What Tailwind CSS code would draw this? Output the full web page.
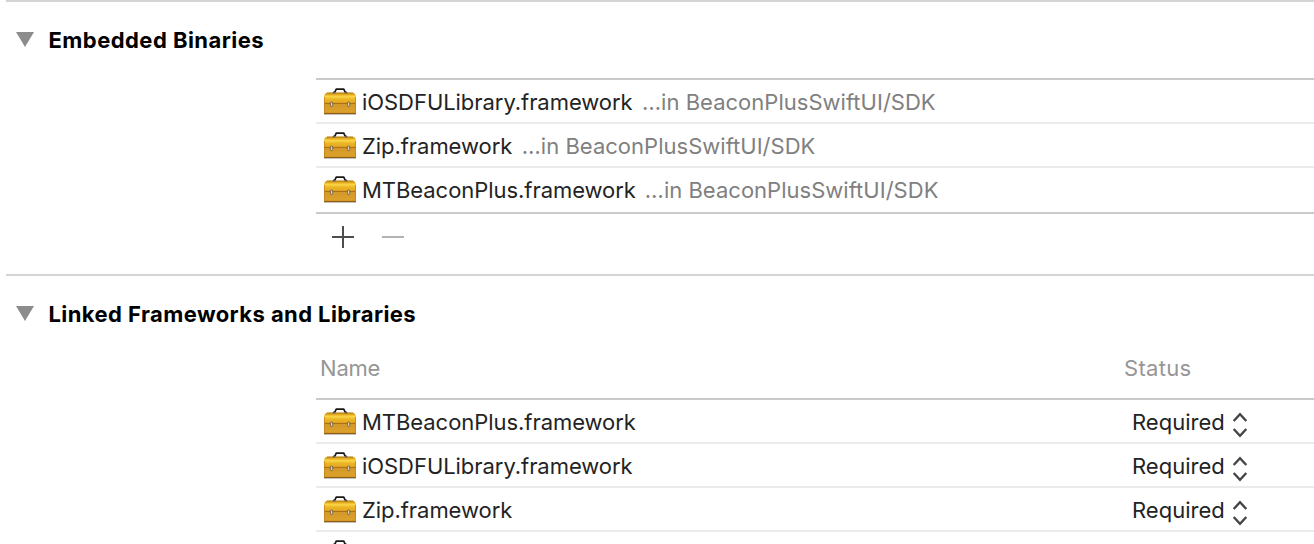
<!DOCTYPE html>
<html lang="en">
<head>
<meta charset="utf-8">
<title>Target – General</title>
<script src="https://cdn.jsdelivr.net/npm/@tailwindcss/browser@4"></script>
</head>
<body class="h-[544px] overflow-hidden bg-white font-[Inter,'Liberation_Sans',sans-serif] text-[22px] leading-[26px] tracking-[-0.05px] text-[#232323]">
<svg class="absolute h-0 w-0">
  <defs>
    <linearGradient id="lid" x1="0" y1="0" x2="0" y2="1">
      <stop offset="0" stop-color="#c98d12"/><stop offset=".2" stop-color="#e9b526"/><stop offset=".38" stop-color="#fbd848"/><stop offset=".55" stop-color="#edb928"/><stop offset="1" stop-color="#e0a422"/>
    </linearGradient>
    <linearGradient id="box" x1="0" y1="0" x2="0" y2="1">
      <stop offset="0" stop-color="#d4982a"/><stop offset="1" stop-color="#dda22a"/>
    </linearGradient>
  </defs>
  <symbol id="toolbox" viewBox="0 0 32 28">
    <rect x="0" y="25.6" width="32" height="1.4" fill="#8f8f8f" opacity=".55"/>
    <path d="M0 15.5V8.5Q.6 5 3.5 4.8H28.5Q31.4 5 32 8.5V15.5Z" fill="url(#lid)"/>
    <path d="M3 5H29" stroke="#b57c10" stroke-width=".8"/>
    <rect x="0" y="15.5" width="32" height="10" fill="url(#box)"/>
    <path d="M0 15.4H32" stroke="#a96a0a" stroke-width="1"/>
    <path d="M0 25.4H32" stroke="#8a5208" stroke-width="1"/>
    <path d="M.4 9V25.5M31.6 9V25.5" stroke="#bd8218" stroke-width=".8"/>
    <path d="M9.2 4.7 11.1 3.8 12.2 1.1H19.8L20.9 3.8 22.8 4.7" fill="none" stroke="#1c1a18" stroke-width="1.7" stroke-linejoin="round"/>
    <path d="M8.6 4.8H11M21 4.8H23.4" stroke="#77705f" stroke-width="1.2"/>
    <rect x="6.4" y="14" width="2.3" height="4.6" rx="1.1" fill="#d9d3c1" stroke="#65543a" stroke-width=".8"/>
    <rect x="23.4" y="14" width="2.3" height="4.6" rx="1.1" fill="#d9d3c1" stroke="#65543a" stroke-width=".8"/>
  </symbol>
  <symbol id="stepper" viewBox="0 0 16 26">
    <path d="M1.7 9 8 2.2 14.3 9M1.7 17 8 23.8 14.3 17" fill="none" stroke="#444" stroke-width="2.3"/>
  </symbol>
  <symbol id="disclosure" viewBox="0 0 18 15">
    <path d="M0 0H18L9 15Z" fill="#8c8c8c"/>
  </symbol>
</svg>

<section class="ml-[6px] h-[274px] border-t-2 border-[#d4d4d4]">
  <header class="flex h-[76px] items-center gap-[14.5px] pl-[10px] font-bold tracking-[0.45px] text-black">
    <svg class="mb-[2px] h-[15px] w-[18px] shrink-0"><use href="#disclosure"/></svg>
    <h2 class="whitespace-nowrap">Embedded Binaries</h2>
  </header>
  <div class="ml-[310px]">
    <ul class="border-y-2 border-[#cacaca]">
      <li class="flex h-11 items-start border-b-2 border-[#ebebeb] pl-2 pt-[9px]">
        <svg class="-mt-[1px] h-7 w-8 shrink-0"><use href="#toolbox"/></svg>
        <span class="ml-[6px]">iOSDFULibrary.framework</span>
        <span class="ml-[9.5px] tracking-[0.02px] text-[#808080]">…in BeaconPlusSwiftUI/SDK</span>
      </li>
      <li class="flex h-11 items-start border-b-2 border-[#ebebeb] pl-2 pt-[9px]">
        <svg class="-mt-[1px] h-7 w-8 shrink-0"><use href="#toolbox"/></svg>
        <span class="ml-[6px]">Zip.framework</span>
        <span class="ml-[9.5px] tracking-[0.02px] text-[#808080]">…in BeaconPlusSwiftUI/SDK</span>
      </li>
      <li class="flex h-11 items-start pl-2 pt-[9px]">
        <svg class="-mt-[1px] h-7 w-8 shrink-0"><use href="#toolbox"/></svg>
        <span class="ml-[6px]">MTBeaconPlus.framework</span>
        <span class="ml-[9px] tracking-[0.02px] text-[#808080]">…in BeaconPlusSwiftUI/SDK</span>
      </li>
    </ul>
    <div class="flex gap-7 pl-4 pt-3">
      <svg class="h-[22px] w-[22px]" viewBox="0 0 22 22"><path d="M0 11H22M11 0V22" stroke="#4d4d4d" stroke-width="2"/></svg>
      <svg class="h-[22px] w-[22px]" viewBox="0 0 22 22"><path d="M0 11H22" stroke="#b2b2b2" stroke-width="2"/></svg>
    </div>
  </div>
</section>

<section class="ml-[6px] border-t-2 border-[#d4d4d4]">
  <header class="flex h-[76px] items-center gap-[14.5px] pl-[10px] font-bold tracking-[0.42px] text-black">
    <svg class="mb-[2px] h-[15px] w-[18px] shrink-0"><use href="#disclosure"/></svg>
    <h2 class="whitespace-nowrap">Linked Frameworks and Libraries</h2>
  </header>
  <div class="ml-[310px]">
    <div class="flex h-[48px] border-b-2 border-[#cacaca] pl-1 pt-[3px] text-[#969696]">
      <span class="w-[804px] tracking-[-0.2px]">Name</span>
      <span class="tracking-[0.3px]">Status</span>
    </div>
    <ul>
      <li class="flex h-11 items-start border-b-2 border-[#ebebeb] pl-2 pt-[9px]">
        <svg class="-mt-[1px] h-7 w-8 shrink-0"><use href="#toolbox"/></svg>
        <span class="ml-[6px] w-[770px]">MTBeaconPlus.framework</span>
        <span class="w-[100px] tracking-[0px]">Required</span>
        <svg class="mt-[3px] h-[26px] w-4"><use href="#stepper"/></svg>
      </li>
      <li class="flex h-11 items-start border-b-2 border-[#ebebeb] pl-2 pt-[9px]">
        <svg class="-mt-[1px] h-7 w-8 shrink-0"><use href="#toolbox"/></svg>
        <span class="ml-[6px] w-[770px]">iOSDFULibrary.framework</span>
        <span class="w-[100px] tracking-[0px]">Required</span>
        <svg class="mt-[3px] h-[26px] w-4"><use href="#stepper"/></svg>
      </li>
      <li class="flex h-11 items-start border-b-2 border-[#ebebeb] pl-2 pt-[9px]">
        <svg class="-mt-[1px] h-7 w-8 shrink-0"><use href="#toolbox"/></svg>
        <span class="ml-[6px] w-[770px]">Zip.framework</span>
        <span class="w-[100px] tracking-[0px]">Required</span>
        <svg class="mt-[3px] h-[26px] w-4"><use href="#stepper"/></svg>
      </li>
      <li class="flex h-3 items-start overflow-hidden pl-2 pt-[9px]">
        <svg class="-mt-[1px] h-7 w-8 shrink-0"><use href="#toolbox"/></svg>
      </li>
    </ul>
  </div>
</section>
</body>
</html>
